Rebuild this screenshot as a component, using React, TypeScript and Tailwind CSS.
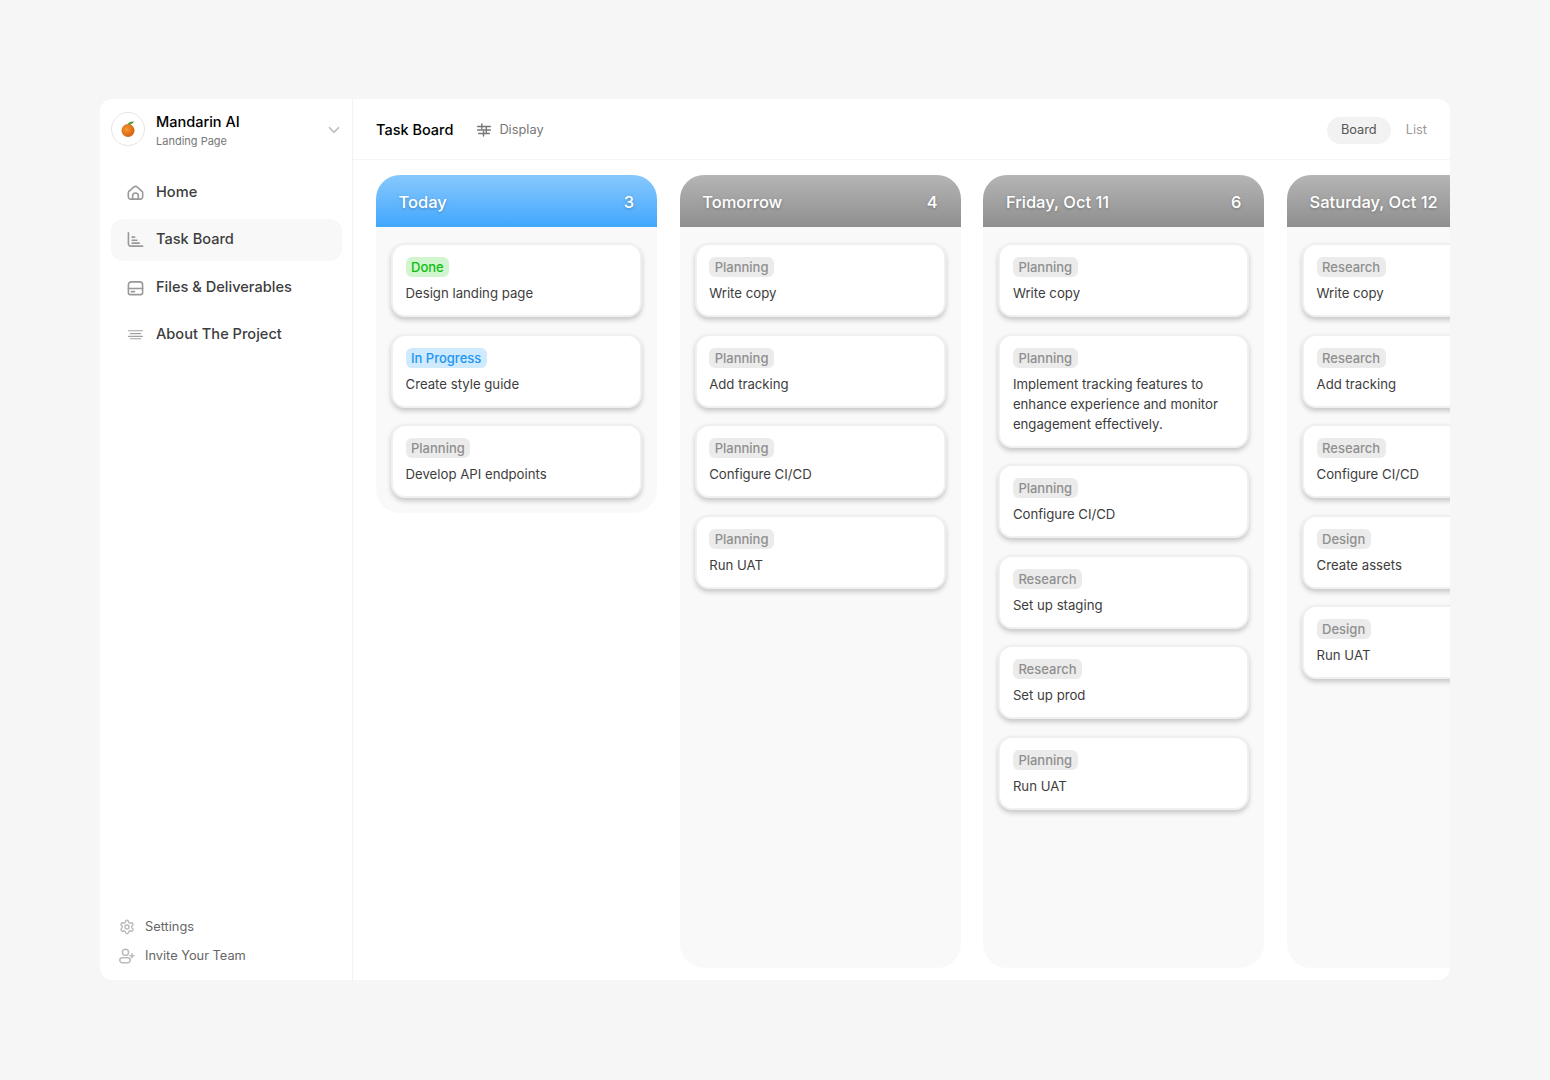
import { ChevronDown, Settings } from 'lucide-react';

type Task = { tag: string; title: string };
type Column = { name: string; count: number; tasks: Task[]; today?: boolean };

const columns: Column[] = [
  {
    name: 'Today',
    count: 3,
    today: true,
    tasks: [
      { tag: 'Done', title: 'Design landing page' },
      { tag: 'In Progress', title: 'Create style guide' },
      { tag: 'Planning', title: 'Develop API endpoints' },
    ],
  },
  {
    name: 'Tomorrow',
    count: 4,
    tasks: [
      { tag: 'Planning', title: 'Write copy' },
      { tag: 'Planning', title: 'Add tracking' },
      { tag: 'Planning', title: 'Configure CI/CD' },
      { tag: 'Planning', title: 'Run UAT' },
    ],
  },
  {
    name: 'Friday, Oct 11',
    count: 6,
    tasks: [
      { tag: 'Planning', title: 'Write copy' },
      { tag: 'Planning', title: 'Implement tracking features to enhance experience and monitor engagement effectively.' },
      { tag: 'Planning', title: 'Configure CI/CD' },
      { tag: 'Research', title: 'Set up staging' },
      { tag: 'Research', title: 'Set up prod' },
      { tag: 'Planning', title: 'Run UAT' },
    ],
  },
  {
    name: 'Saturday, Oct 12',
    count: 5,
    tasks: [
      { tag: 'Research', title: 'Write copy' },
      { tag: 'Research', title: 'Add tracking' },
      { tag: 'Research', title: 'Configure CI/CD' },
      { tag: 'Design', title: 'Create assets' },
      { tag: 'Design', title: 'Run UAT' },
    ],
  },
];

function tagClass(tag: string) {
  if (tag === 'Done') return 'bg-[#d0f5cf] text-[#0fbf0f]';
  if (tag === 'In Progress') return 'bg-[#cfe9fd] text-[#2196f3]';
  return 'bg-[#ebebeb] text-[#8f8f8f]';
}

function HomeIcon() {
  return (
    <svg width="18" height="18" viewBox="0 0 18 18" fill="none" stroke="#999" strokeWidth="1.700" strokeLinecap="round" strokeLinejoin="round">
      <path d="M2 7.200 7.400 2.600a2.500 2.500 0 0 1 3.200 0L16 7.200a1.800 1.800 0 0 1 .6 1.400v4.400a2.500 2.500 0 0 1-2.500 2.500H3.900a2.500 2.500 0 0 1-2.500-2.500V8.600a1.800 1.800 0 0 1 .6-1.400Z" />
      <path d="M6 15.500v-3.500a3 3 0 0 1 6 0v3.500" />
    </svg>
  );
}

function BoardIcon() {
  return (
    <svg width="18" height="18" viewBox="0 0 18 18" fill="none" stroke="#999" strokeWidth="1.700" strokeLinecap="round">
      <path d="M1.500 1.500v11.500a2.500 2.500 0 0 0 2.500 2.500h12.500" />
      <path d="M5.500 6h2.500M5.500 9.200h5M5.500 12.300h7.500" />
    </svg>
  );
}

function DriveIcon() {
  return (
    <svg width="18" height="18" viewBox="0 0 18 18" fill="none" stroke="#999" strokeWidth="1.700" strokeLinecap="round">
      <path d="M4.500 2.500h9a3 3 0 0 1 3 3V14a2 2 0 0 1-2 2H3.500a2 2 0 0 1-2-2V5.500a3 3 0 0 1 3-3Z" />
      <path d="M1.500 9.500h15M4.500 12.800h3.500" />
    </svg>
  );
}

function LinesIcon() {
  return (
    <svg width="18" height="18" viewBox="0 0 18 18" fill="none" stroke="#a3a3a3" strokeWidth="1.200" strokeLinecap="round">
      <path d="M1.500 4.500h15M3.500 7.500h11M1.500 10.500h15M3.500 13h11" />
    </svg>
  );
}

function InviteIcon() {
  return (
    <svg width="16" height="16" viewBox="0 0 16 16" fill="none" stroke="#bbb" strokeWidth="1.500" strokeLinecap="round">
      <circle cx="6.500" cy="4.300" r="3.100" />
      <path d="M3.300 9.700h5.500a2.500 2.500 0 0 1 0 5H3.300a2.500 2.500 0 0 1 0-5Z" />
      <path d="M13 5.800v4M11 7.800h4" />
    </svg>
  );
}

function DisplayIcon() {
  return (
    <svg width="14" height="14" viewBox="0 0 14 14" fill="none" stroke="#777" strokeWidth="1.400" strokeLinecap="round">
      <path d="M.7 3.500h12.600M.7 7h12.600M1.700 10.500h10.600M4.800 1v4.500M9.300 4.500v5M6.500 8.500V13" />
    </svg>
  );
}

function Mandarin() {
  return (
    <svg width="16" height="18" viewBox="0 0 16 18">
      <defs>
        <radialGradient id="fruit" cx="0.4" cy="0.4" r="0.7">
          <stop offset="0" stopColor="#f59a32" />
          <stop offset="1" stopColor="#d4540c" />
        </radialGradient>
      </defs>
      <circle cx="8" cy="10.500" r="6.500" fill="url(#fruit)" />
      <path d="M7.500 4.500C8.500 2 11 1 14 1.500 13 4 10.500 5 7.500 4.500Z" fill="#5c9a35" />
    </svg>
  );
}

function NavItem({ icon, label, active }: { icon: React.ReactNode; label: string; active?: boolean }) {
  return (
    <div className={`flex h-[42px] items-center gap-[12px] rounded-[12px] pl-[16px] text-[14.600px] font-medium text-[#3d3d3d] ${active ? 'bg-[#f8f8f8]' : ''}`}>
      <span className="flex w-[17px] justify-center">{icon}</span>
      {label}
    </div>
  );
}

function TaskCard({ task }: { task: Task }) {
  return (
    <div className="rounded-[14px] border-2 border-[#f0f0f0] bg-white px-[12.500px] py-[12px] shadow-[0_3px_5px_rgba(0,0,0,0.2)]">
      <span className={`block h-[20px] w-fit rounded-[6px] px-[5.500px] text-[13px] leading-[20px] font-medium ${tagClass(task.tag)}`}>
        {task.tag}
      </span>
      <p className="mt-[6px] text-[13.200px] leading-[20px] text-[#3d3d3d]">{task.title}</p>
    </div>
  );
}

function BoardColumn({ column }: { column: Column }) {
  return (
    <div className={`flex w-[281px] shrink-0 flex-col overflow-hidden rounded-[24px] bg-[#f9f9f9] ${column.today ? 'self-start' : 'self-stretch'}`}>
      <div
        className={`flex h-[52px] shrink-0 items-center justify-between pl-[22.500px] pr-[23px] pt-[2px] text-[16.500px] font-medium text-white [text-shadow:0_1px_3px_rgba(0,0,0,0.25)] ${
          column.today ? 'bg-gradient-to-b from-[#86c8fd] to-[#3fa7fd]' : 'bg-gradient-to-b from-[#b5b5b5] to-[#8f8f8f]'
        }`}
      >
        <span className="whitespace-nowrap">{column.name}</span>
        <span>{column.count}</span>
      </div>
      <div className="flex flex-col gap-[16.500px] px-[15px] pb-[14.500px] pt-[16.300px]">
        {column.tasks.map((task, i) => (
          <TaskCard key={i} task={task} />
        ))}
      </div>
    </div>
  );
}

export default function App() {
  return (
    <div className="h-[1080px] bg-[#f6f6f6] px-[100px] pt-[99px] [font-family:Inter,sans-serif]">
      <div className="flex h-[881px] overflow-hidden rounded-[12px] bg-white">
        <aside className="flex w-[253px] shrink-0 flex-col border-r border-[#f2f2f2] pb-[10px] pl-[11px] pr-[10px] pt-[13px]">
          <div className="flex items-start gap-[11px]">
            <div className="flex h-[34px] w-[34px] items-center justify-center rounded-full border border-[#e5e5e5]">
              <Mandarin />
            </div>
            <div className="flex-1">
              <div className="text-[14.500px] leading-[20px] font-medium text-black">Mandarin AI</div>
              <div className="mt-[0.500px] text-[11px] leading-[16px] text-[#777]">Landing Page</div>
            </div>
            <ChevronDown size={18} strokeWidth={2.200} className="-mr-[1px] mt-[9px] text-[#bbb]" />
          </div>
          <nav className="mt-[23px] flex flex-col gap-[5.500px]">
            <NavItem icon={<HomeIcon />} label="Home" />
            <NavItem icon={<BoardIcon />} label="Task Board" active />
            <NavItem icon={<DriveIcon />} label="Files & Deliverables" />
            <NavItem icon={<LinesIcon />} label="About The Project" />
          </nav>
          <div className="mt-auto flex flex-col text-[12.800px] text-[#666]">
            <div className="flex h-[29px] items-center gap-[10px] pl-[8px]">
              <Settings size={16} strokeWidth={2.200} className="text-[#bbb]" />
              Settings
            </div>
            <div className="flex h-[29px] items-center gap-[10px] pl-[8px]">
              <InviteIcon />
              Invite Your Team
            </div>
          </div>
        </aside>
        <main className="flex min-w-0 flex-1 flex-col">
          <header className="flex h-[61px] shrink-0 items-center border-b border-[#f5f5f5] px-[23px] pt-[2px]">
            <h1 className="text-[14.500px] font-medium text-black">Task Board</h1>
            <div className="ml-[24px] flex items-center gap-[8px] text-[12.800px] text-[#777]">
              <DisplayIcon />
              Display
            </div>
            <div className="ml-auto flex items-center gap-[15px] text-[12.800px]">
              <span className="flex h-[27px] items-center rounded-full bg-[#f2f2f2] px-[14px] text-[#555]">Board</span>
              <span className="text-[#999]">List</span>
            </div>
          </header>
          <div className="flex min-h-0 flex-1 gap-[22.700px] overflow-hidden pb-[12px] pl-[23px] pt-[15px]">
            {columns.map(column => (
              <BoardColumn key={column.name} column={column} />
            ))}
          </div>
        </main>
      </div>
    </div>
  );
}
